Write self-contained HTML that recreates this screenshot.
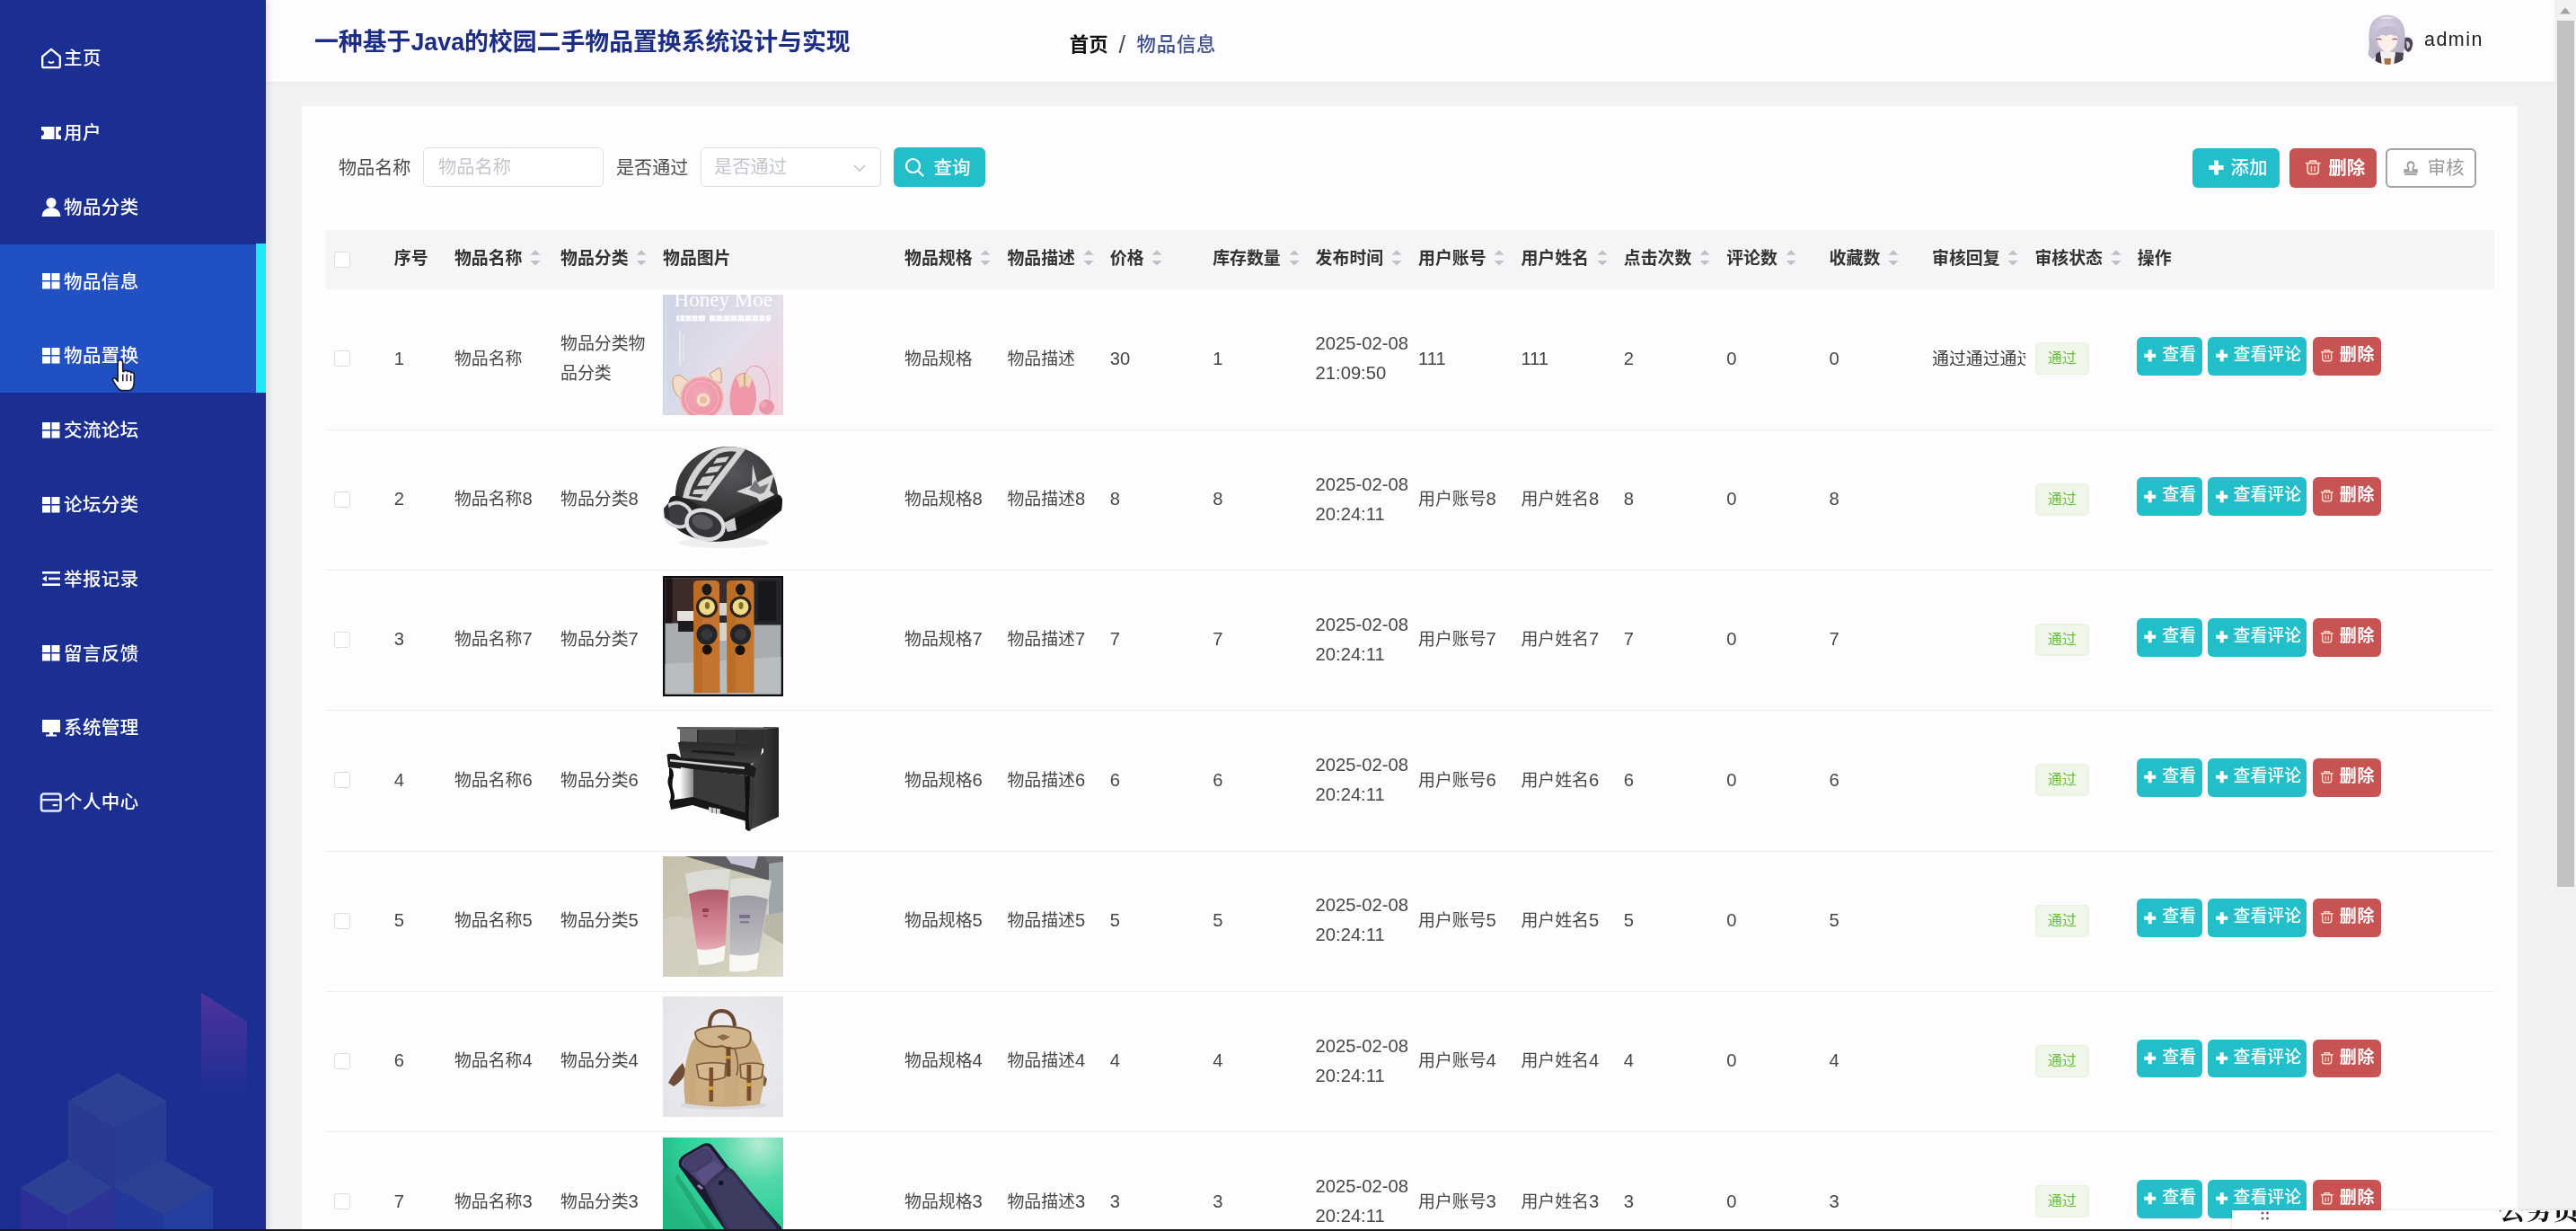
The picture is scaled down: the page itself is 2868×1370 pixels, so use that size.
<!DOCTYPE html>
<html lang="zh-CN"><head><meta charset="utf-8"><title>物品信息</title>
<style>
*{box-sizing:border-box;margin:0;padding:0}
html,body{width:2868px;height:1370px;overflow:hidden}
body{position:relative;background:#f1f2f3;font-family:"Liberation Sans","Noto Sans CJK SC",sans-serif;color:#555;font-size:19px}
.abs{position:absolute}
#side{will-change:transform;position:absolute;left:0;top:0;width:296px;height:1370px;background:#1b2f93;box-shadow:2px 0 9px rgba(0,0,0,.13);z-index:5;overflow:hidden}
.mi{position:absolute;left:0;width:296px;height:82.7px;color:#fff;font-size:20.5px;letter-spacing:.4px;font-weight:500;line-height:83.6px;white-space:nowrap}
.mi span{position:absolute;left:71px;top:0}
.mi svg{position:absolute;left:44px;top:28.8px}
.mi.act{background:#2150c3}
#cy{position:absolute;left:285px;top:271.4px;width:11px;height:165.7px;background:#22e6fa}
#hdr{will-change:transform;position:absolute;left:296px;top:0;width:2548px;height:91px;background:#fefcfe;box-shadow:0 1px 5px rgba(0,0,0,.05);z-index:3}
#title{position:absolute;left:54px;top:0;line-height:94px;font-size:26.85px;font-weight:700;color:#1b2d84;white-space:nowrap}
#bc{position:absolute;left:894.8px;top:0;line-height:101.2px;font-size:21.4px;white-space:nowrap;color:#3f5391}
#bc b{color:#111;font-weight:700}
#bc i{font-style:normal;color:#4a4f5c;margin:0 12.5px 0 12px;font-weight:400;font-size:27px;line-height:20px;position:relative;top:1.6px}
#bc span{font-weight:500;letter-spacing:.75px}
#admin{position:absolute;left:2403px;top:0;line-height:88.4px;font-size:21.5px;color:#222;letter-spacing:1.45px}
#card{position:absolute;left:336px;top:118px;width:2467px;height:1300px;background:#fefcfe;z-index:1}
.lbl{position:absolute;top:164px;line-height:46.5px;font-size:20.1px;color:#4c4c4c;white-space:nowrap}
.inp{position:absolute;top:164px;height:44px;border:1.4px solid #dcdfe6;border-radius:5px;background:#fff;color:#c3c6cd;font-size:20.3px;line-height:43px;padding-left:16px;white-space:nowrap}
.btn{position:absolute;height:44px;border-radius:6px;color:#fff;font-size:19px;line-height:44px;white-space:nowrap}
.teal{background:#22bfca}
.red{background:#c85353}
#tbl{will-change:transform;position:absolute;left:363px;top:255.6px;width:2413.5px;z-index:2}
#th{position:absolute;left:0;top:0;width:2413.5px;height:66.4px;background:#f5f4f6}
.h{position:absolute;top:0;line-height:63px;font-weight:700;color:#333;font-size:18.9px;white-space:nowrap}
.car{position:absolute;top:20px;width:12px;height:24px}
.row{position:absolute;left:0;width:2413.5px;height:156.3px;border-bottom:1.3px solid #ebeef5}
.c{position:absolute;top:0;height:153.8px;display:flex;align-items:center;font-size:18.9px;line-height:33px;color:#474747;white-space:nowrap}
.n{font-size:20.2px}
.c.w{white-space:normal}
.cb{position:absolute;width:18px;height:18px;border:1.3px solid #dcdfe6;border-radius:3px;background:#fff}
.tag{position:absolute;left:1902.5px;top:59px;width:60.5px;height:36px;border:1.3px solid #e4f2da;background:#f0f7ea;border-radius:5px;color:#67c23a;font-size:16px;line-height:33px;text-align:center}
.b1{left:2016px;width:72.5px}
.b2{left:2095px;width:110px}
.b3{left:2211.8px;width:76px}
.rb{top:52.8px;height:42.8px;line-height:40px;font-size:18.9px;font-weight:500}
.rb svg{position:absolute;top:13px}
.rb span{position:absolute;top:0}
.img{position:absolute;left:375px;top:5.5px;width:134px;height:134px;overflow:hidden}
#sb{position:absolute;left:2844px;top:0;width:24px;height:1370px;background:#f1f1f1;z-index:6}
#sbt{position:absolute;left:3px;top:23px;width:19px;height:964px;background:#c1c0c2}
#ov{will-change:transform;position:absolute;left:2485px;top:1347px;width:383px;height:21px;background:#fff;z-index:8;overflow:hidden;box-shadow:0 0 3px rgba(0,0,0,.15)}
#ov span{position:absolute;left:297px;top:-15px;font-family:"Liberation Serif","Noto Serif CJK SC",serif;font-weight:700;font-size:30px;color:#111;white-space:nowrap;line-height:30px}
#bot{position:absolute;left:0;top:1367.5px;width:2868px;height:2.5px;background:#1a1a1e;z-index:9}
</style></head>
<body>
<div id="side">
<div class="mi" style="top:23.0px"><svg width="26" height="26" viewBox="0 0 26 26"><path d="M13 2.800 L22.800 10.800 V21.500 Q22.800 23.200 21 23.200 H5 Q3.200 23.200 3.200 21.500 V10.800 Z" fill="none" stroke="#fff" stroke-width="2.300" stroke-linejoin="round"/><path d="M10 16.5 Q13 19.5 16 16.5" fill="none" stroke="#fff" stroke-width="2"/></svg><span>主页</span></div>
<div class="mi" style="top:105.8px"><svg width="26" height="26" viewBox="0 0 26 26"><path d="M2 6 H24 V10 A3 3 0 0 0 24 16 V20 H2 V16 A3 3 0 0 0 2 10 Z" fill="#fff"/><rect x="16.5" y="6" width="1.6" height="14" fill="#1b2f93"/></svg><span>用户</span></div>
<div class="mi" style="top:188.6px"><svg width="26" height="26" viewBox="0 0 26 26"><circle cx="13" cy="8.5" r="5.5" fill="#fff"/><path d="M2.5 24 Q3 15 13 14 Q23 15 23.5 24 Z" fill="#fff"/></svg><span>物品分类</span></div>
<div class="mi act" style="top:271.5px"><svg width="26" height="26" viewBox="0 0 26 26"><rect x="3" y="4" width="9" height="8" fill="#fff"/><rect x="13.5" y="4" width="9" height="8" fill="#fff"/><rect x="3" y="13.5" width="9" height="8" fill="#fff"/><rect x="13.5" y="13.5" width="9" height="8" fill="#fff"/></svg><span>物品信息</span></div>
<div class="mi act" style="top:354.3px"><svg width="26" height="26" viewBox="0 0 26 26"><rect x="3" y="4" width="9" height="8" fill="#fff"/><rect x="13.5" y="4" width="9" height="8" fill="#fff"/><rect x="3" y="13.5" width="9" height="8" fill="#fff"/><rect x="13.5" y="13.5" width="9" height="8" fill="#fff"/></svg><span>物品置换</span></div>
<div class="mi" style="top:437.1px"><svg width="26" height="26" viewBox="0 0 26 26"><rect x="3" y="4" width="9" height="8" fill="#fff"/><rect x="13.5" y="4" width="9" height="8" fill="#fff"/><rect x="3" y="13.5" width="9" height="8" fill="#fff"/><rect x="13.5" y="13.5" width="9" height="8" fill="#fff"/></svg><span>交流论坛</span></div>
<div class="mi" style="top:519.9px"><svg width="26" height="26" viewBox="0 0 26 26"><rect x="3" y="4" width="9" height="8" fill="#fff"/><rect x="13.5" y="4" width="9" height="8" fill="#fff"/><rect x="3" y="13.5" width="9" height="8" fill="#fff"/><rect x="13.5" y="13.5" width="9" height="8" fill="#fff"/></svg><span>论坛分类</span></div>
<div class="mi" style="top:602.7px"><svg width="26" height="26" viewBox="0 0 26 26"><rect x="3" y="5" width="20" height="2.6" fill="#fff"/><rect x="10" y="11.7" width="13" height="2.6" fill="#fff"/><rect x="3" y="18.4" width="20" height="2.6" fill="#fff"/><path d="M3 13 L8 9.5 V16.5 Z" fill="#fff"/></svg><span>举报记录</span></div>
<div class="mi" style="top:685.6px"><svg width="26" height="26" viewBox="0 0 26 26"><rect x="3" y="4" width="9" height="8" fill="#fff"/><rect x="13.5" y="4" width="9" height="8" fill="#fff"/><rect x="3" y="13.5" width="9" height="8" fill="#fff"/><rect x="13.5" y="13.5" width="9" height="8" fill="#fff"/></svg><span>留言反馈</span></div>
<div class="mi" style="top:768.4px"><svg width="26" height="26" viewBox="0 0 26 26"><rect x="3" y="4" width="20" height="14" fill="#fff"/><rect x="11" y="18" width="4" height="3" fill="#fff"/><rect x="7" y="20.5" width="12" height="2" fill="#fff"/></svg><span>系统管理</span></div>
<div class="mi" style="top:851.2px"><svg width="26" height="26" viewBox="0 0 26 26"><rect x="2" y="3.500" width="21.500" height="19" rx="2.800" fill="none" stroke="#e4e8ff" stroke-width="2.600"/><rect x="2" y="9" width="21.500" height="2.300" fill="#e4e8ff"/><rect x="14.500" y="15" width="6" height="2.200" fill="#e4e8ff"/></svg><span>个人中心</span></div>
<div id="cy"></div>
<svg class="abs" style="left:0;top:1080px" width="296" height="290" viewBox="0 1080 296 290">
<defs><linearGradient id="pg" x1="0" y1="0" x2="0" y2="1"><stop offset="0" stop-color="#5a35a0" stop-opacity=".85"/><stop offset=".6" stop-color="#3c309a" stop-opacity=".55"/><stop offset="1" stop-color="#2a3096" stop-opacity="0"/></linearGradient></defs>
<polygon points="224,1105 275,1137 275,1230 224,1216" fill="url(#pg)"/>
<polygon points="131,1194 185,1225 128,1256 76,1225" fill="#2d4194"/>
<polygon points="76,1225 128,1256 128,1322 76,1290" fill="#2a3a93"/>
<polygon points="128,1256 185,1225 185,1290 128,1322" fill="#2b3c93"/>
<polygon points="76,1290 126,1322 74,1353 23,1322" fill="#2d4194"/>
<polygon points="180,1290 237,1322 183,1353 128,1322" fill="#2d4194"/>
<polygon points="23,1322 74,1353 74,1370 23,1370" fill="#2b2f97"/>
<polygon points="74,1353 126,1322 128,1322 128,1370 74,1370" fill="#2f3399"/>
<polygon points="128,1322 183,1353 183,1370 128,1370" fill="#21399a"/>
<polygon points="183,1353 237,1322 237,1370 183,1370" fill="#243f9f"/>
</svg>
<svg class="abs" style="left:122px;top:398px;z-index:3" width="35" height="41.500" viewBox="0 0 32 38"><path d="M10 2.5 C12 2 13.5 3 13.5 5 V14 L15 14 C15 12.6 18 12.6 18.2 14.4 C19 13.3 21.6 13.6 21.8 15.5 C22.8 14.6 25 15 25 17 V25 C25 30 22.5 33.5 20 33.5 H12 C9.5 33.5 6.5 29 3.5 23.5 C2.3 21.3 4.5 19.8 6.3 21.6 L8.3 24 V5 C8.3 3.5 9 2.8 10 2.5 Z" fill="#fff" stroke="#1a1a3a" stroke-width="1.6" stroke-linejoin="round"/><path d="M13.5 17 V24 M17.6 17 V24 M21.6 18 V24" stroke="#1a1a3a" stroke-width="1.4"/></svg>
</div>
<div id="hdr"><div id="title">一种基于Java的校园二手物品置换系统设计与实现</div>
<div id="bc"><b>首页</b><i>/</i><span>物品信息</span></div>
<svg class="abs" style="left:2335px;top:16px" width="56" height="56" viewBox="0 0 56 56"><defs><clipPath id="av"><circle cx="28" cy="28" r="28"/></clipPath><radialGradient id="avh" cx=".5" cy=".3" r=".7"><stop offset="0" stop-color="#d9d3e3"/><stop offset="1" stop-color="#b4adc4"/></radialGradient></defs><g clip-path="url(#av)"><path d="M46 26 Q54 24 55.500 32 Q56 40 50 42 Q46 40 45 34 Z" fill="#4d4756"/><path d="M48 30 Q52 30 52 35 Q51 38 49 38 Z" fill="#d9d3de"/><path d="M6.500 24 Q6 2 26.500 0.500 Q47 2 46.500 24 Q47 36 44 46 L36 44 L16 44 Q12 52 4 50 Q8 38 6.500 24 Z" fill="url(#avh)"/><path d="M18 4 Q26 1 35 4 Q27 6 18 4 Z" fill="#e9e4f0"/><path d="M14.500 44 L19 41 L21 56 L13 56 Z" fill="#3b3742"/><path d="M36 42 L45 43 L44 54 L34 56 Z" fill="#4a4452"/><path d="M19 41 L36 42 L34 56 L21 56 Z" fill="#f2eef2"/><path d="M23.500 49 L31 49 L30.500 56 L24 56 Z" fill="#a9713c"/><path d="M15.500 26 Q16 22 20 23 L34 23 Q38 22 38.500 27 Q38 35 33 39 Q28 43 26.500 43 Q24 42 20 38 Q15.500 33 15.500 26 Z" fill="#fcefe9"/><path d="M13 28 Q13 14 27 13 Q41 14 40.500 28 Q38 22 34 24 Q30 20 26 24.500 Q21 21 18 25 Q14 24 13 28 Z" fill="#c3bcd1"/><path d="M14.500 28 Q17.500 26.500 20.500 28" fill="none" stroke="#9a6688" stroke-width="1.500"/><path d="M32.500 28 Q35.500 26.500 38 28" fill="none" stroke="#9a6688" stroke-width="1.500"/><path d="M6.500 26 Q8 40 5 50 L11 50 Q14 40 13 28 Z" fill="#bdb6cb"/></g></svg>
<div id="admin">admin</div>
</div>
<div id="card"></div>
<div class="abs" style="left:0;top:0;z-index:2;will-change:transform">
<div class="lbl" style="left:377px">物品名称</div>
<div class="inp" style="left:471px;width:201px">物品名称</div>
<div class="lbl" style="left:686px">是否通过</div>
<div class="inp" style="left:780px;width:201px;padding-left:14px">是否通过<svg class="abs" style="left:166px;top:12px" width="20" height="20" viewBox="0 0 20 20"><path d="M4 7 L10 13 L16 7" fill="none" stroke="#c0c4cc" stroke-width="1.6"/></svg></div>
<div class="btn teal" style="left:994.5px;top:164px;width:102px"><svg class="abs" style="left:10px;top:9px" width="26" height="26" viewBox="0 0 26 26"><circle cx="11.5" cy="11.5" r="7.5" fill="none" stroke="#fff" stroke-width="2.2"/><path d="M17 17 L22.5 22.5" stroke="#fff" stroke-width="2.4" stroke-linecap="round"/></svg><span class="abs" style="left:45px;top:0;font-size:20.5px;font-weight:500;line-height:45.5px">查询</span></div>
<div class="btn teal" style="left:2441.4px;top:164.5px;width:97px"><svg class="abs" style="left:16.5px;top:12.5px" width="19" height="19" viewBox="0 0 20 20"><path d="M10 1.5 V18.5 M1.5 10 H18.5" stroke="#fff" stroke-width="5.2"/></svg><span class="abs" style="left:42px;top:0;font-size:20.5px;font-weight:500">添加</span></div>
<div class="btn red" style="left:2549.2px;top:164.5px;width:97px"><svg class="abs" style="left:16.5px;top:12.5px" width="18.5" height="18.5" viewBox="0 0 20 20"><path d="M1 5 H19 M6.5 4.5 V2.2 H13.500 V4.500 M3.500 6 V14.500 Q3.500 18 7 18 H13 Q16.500 18 16.500 14.500 V6" fill="none" stroke="#ffd9c8" stroke-width="1.9"/><path d="M8 8.500 V15 M12 8.500 V15" stroke="#ffd9c8" stroke-width="1.600"/></svg><span class="abs" style="left:43px;top:0;font-size:20.5px;font-weight:700">删除</span></div>
<div class="btn" style="left:2656.4px;top:164.5px;width:100.6px;background:#fff;border:2px solid #a3a3a6;color:#999;line-height:40px"><svg class="abs" style="left:17px;top:11px" width="18" height="18" viewBox="0 0 20 20"><path d="M7.2 10 C5 7.5 6 2.5 10 2.5 C14 2.5 15 7.5 12.8 10 V12.5 H17.5 V15 H2.5 V12.5 H7.2 Z M2.5 18 H17.5" fill="none" stroke="#9a9a9c" stroke-width="2"/></svg><span class="abs" style="left:44px;top:0;font-size:20.5px">审核</span></div>
</div>
<div id="tbl"><div id="th">
<div class="cb" style="left:8.7px;top:24px"></div>
<div class="h" style="left:75.8px">序号</div>
<div class="h" style="left:142.9px">物品名称</div><svg class="car" style="left:227.2px" viewBox="0 0 12 24"><path d="M6 2.2 L11.5 7.8 H0.5 Z M6 19.5 L11.5 13.9 H0.5 Z" fill="#c1c1c7"/></svg>
<div class="h" style="left:261.0px">物品分类</div><svg class="car" style="left:345.3px" viewBox="0 0 12 24"><path d="M6 2.2 L11.5 7.8 H0.5 Z M6 19.5 L11.5 13.9 H0.5 Z" fill="#c1c1c7"/></svg>
<div class="h" style="left:375.0px">物品图片</div>
<div class="h" style="left:644.0px">物品规格</div><svg class="car" style="left:728.3px" viewBox="0 0 12 24"><path d="M6 2.2 L11.5 7.8 H0.5 Z M6 19.5 L11.5 13.9 H0.5 Z" fill="#c1c1c7"/></svg>
<div class="h" style="left:758.4px">物品描述</div><svg class="car" style="left:842.7px" viewBox="0 0 12 24"><path d="M6 2.2 L11.5 7.8 H0.5 Z M6 19.5 L11.5 13.9 H0.5 Z" fill="#c1c1c7"/></svg>
<div class="h" style="left:872.8px">价格</div><svg class="car" style="left:919.3px" viewBox="0 0 12 24"><path d="M6 2.2 L11.5 7.8 H0.5 Z M6 19.5 L11.5 13.9 H0.5 Z" fill="#c1c1c7"/></svg>
<div class="h" style="left:987.2px">库存数量</div><svg class="car" style="left:1071.5px" viewBox="0 0 12 24"><path d="M6 2.2 L11.5 7.8 H0.5 Z M6 19.5 L11.5 13.9 H0.5 Z" fill="#c1c1c7"/></svg>
<div class="h" style="left:1101.6px">发布时间</div><svg class="car" style="left:1185.9px" viewBox="0 0 12 24"><path d="M6 2.2 L11.5 7.8 H0.5 Z M6 19.5 L11.5 13.9 H0.5 Z" fill="#c1c1c7"/></svg>
<div class="h" style="left:1216.0px">用户账号</div><svg class="car" style="left:1300.3px" viewBox="0 0 12 24"><path d="M6 2.2 L11.5 7.8 H0.5 Z M6 19.5 L11.5 13.9 H0.5 Z" fill="#c1c1c7"/></svg>
<div class="h" style="left:1330.4px">用户姓名</div><svg class="car" style="left:1414.7px" viewBox="0 0 12 24"><path d="M6 2.2 L11.5 7.8 H0.5 Z M6 19.5 L11.5 13.9 H0.5 Z" fill="#c1c1c7"/></svg>
<div class="h" style="left:1444.8px">点击次数</div><svg class="car" style="left:1529.1px" viewBox="0 0 12 24"><path d="M6 2.2 L11.5 7.8 H0.5 Z M6 19.5 L11.5 13.9 H0.5 Z" fill="#c1c1c7"/></svg>
<div class="h" style="left:1559.2px">评论数</div><svg class="car" style="left:1624.6px" viewBox="0 0 12 24"><path d="M6 2.2 L11.5 7.8 H0.5 Z M6 19.5 L11.5 13.9 H0.5 Z" fill="#c1c1c7"/></svg>
<div class="h" style="left:1673.6px">收藏数</div><svg class="car" style="left:1739.0px" viewBox="0 0 12 24"><path d="M6 2.2 L11.5 7.8 H0.5 Z M6 19.5 L11.5 13.9 H0.5 Z" fill="#c1c1c7"/></svg>
<div class="h" style="left:1788.0px">审核回复</div><svg class="car" style="left:1872.3px" viewBox="0 0 12 24"><path d="M6 2.2 L11.5 7.8 H0.5 Z M6 19.5 L11.5 13.9 H0.5 Z" fill="#c1c1c7"/></svg>
<div class="h" style="left:1902.4px">审核状态</div><svg class="car" style="left:1986.7px" viewBox="0 0 12 24"><path d="M6 2.2 L11.5 7.8 H0.5 Z M6 19.5 L11.5 13.9 H0.5 Z" fill="#c1c1c7"/></svg>
<div class="h" style="left:2016.8px">操作</div>
</div>
<div class="row" style="top:66.4px">
<div class="cb" style="left:8.7px;top:68px"></div>
<div class="c" style="left:75.8px"><div><span class="n">1</span></div></div><div class="c" style="left:142.9px"><div>物品名称</div></div><div class="c" style="left:261.0px"><div>物品分类物<br>品分类</div></div><div class="c" style="left:644.0px"><div>物品规格</div></div><div class="c" style="left:758.4px"><div>物品描述</div></div><div class="c" style="left:872.8px"><div><span class="n">30</span></div></div><div class="c" style="left:987.2px"><div><span class="n">1</span></div></div><div class="c" style="left:1101.6px"><div><span class="n">2025-02-08</span><br><span class="n">21:09:50</span></div></div><div class="c" style="left:1216.0px"><div><span class="n">111</span></div></div><div class="c" style="left:1330.4px"><div><span class="n">111</span></div></div><div class="c" style="left:1444.8px"><div><span class="n">2</span></div></div><div class="c" style="left:1559.2px"><div><span class="n">0</span></div></div><div class="c" style="left:1673.6px"><div><span class="n">0</span></div></div><div class="c" style="left:1788.0px;width:104px;overflow:hidden;color:#3c3c3c"><div>通过通过通过</div></div>
<div class="img"><svg width="134" height="134" viewBox="0 0 134 134"><defs><linearGradient id="g1" x1="0" y1="0" x2="1" y2="1"><stop offset="0" stop-color="#cdd2e3"/><stop offset=".5" stop-color="#e3deeb"/><stop offset="1" stop-color="#f3d0dc"/></linearGradient><linearGradient id="g1b" x1="0" y1="0" x2="1" y2="0"><stop offset="0" stop-color="#c6d9e6"/><stop offset="1" stop-color="#e8d4e2" stop-opacity="0"/></linearGradient><radialGradient id="g1c" cx=".45" cy=".4" r=".6"><stop offset="0" stop-color="#f3a9b8"/><stop offset="1" stop-color="#ec94a6"/></radialGradient></defs><rect width="134" height="134" fill="url(#g1)"/><rect y="0" width="70" height="134" fill="url(#g1b)" opacity=".6"/><rect x="3" y="0" width="1.2" height="134" fill="#e9e6f0" opacity=".7"/><rect x="129" y="0" width="1.2" height="134" fill="#f6e6ee" opacity=".7"/><text x="12.5" y="13" font-family="'Liberation Serif',serif" font-size="23.5" fill="#fff" textLength="109.5" lengthAdjust="spacingAndGlyphs">Honey Moe</text><g fill="#fff" opacity=".85"><rect x="15" y="23" width="32" height="6.5" rx="1"/><rect x="52" y="23" width="68" height="6.5" rx="1"/></g><g fill="#dfe0ee" opacity=".9"><rect x="18" y="23" width="1.5" height="6.5"/><rect x="24" y="23" width="1.5" height="6.5"/><rect x="31" y="23" width="1.5" height="6.5"/><rect x="38" y="23" width="1.5" height="6.5"/><rect x="58" y="23" width="1.5" height="6.5"/><rect x="66" y="23" width="1.5" height="6.5"/><rect x="74" y="23" width="1.5" height="6.5"/><rect x="82" y="23" width="1.5" height="6.5"/><rect x="90" y="23" width="1.5" height="6.5"/><rect x="98" y="23" width="1.5" height="6.5"/><rect x="106" y="23" width="1.5" height="6.5"/><rect x="113" y="23" width="1.5" height="6.5"/></g><rect x="18" y="39" width="2" height="40" fill="#fff" opacity=".4"/><rect x="22" y="44" width="1.6" height="30" fill="#fff" opacity=".35"/><path d="M92 88 Q98 74 110 82 Q120 92 119 116" fill="none" stroke="#e7a3b2" stroke-width="1.1"/><path d="M11 96 Q12 88 20 90 L33 100 L20 116 Q10 108 11 96 Z" fill="#f3dcc8" stroke="#c79a72" stroke-width="1"/><path d="M52 88 L63 81 Q66 84 65 98 L56 96 Z" fill="#f3dcc8" stroke="#c79a72" stroke-width="1"/><circle cx="43.5" cy="115" r="25" fill="#f1c9bd"/><circle cx="43.5" cy="115" r="23" fill="url(#g1c)"/><circle cx="43.5" cy="115" r="18.5" fill="none" stroke="#f4b9c4" stroke-width="1.2"/><circle cx="45" cy="117" r="7.5" fill="#f6dcc6"/><circle cx="45" cy="117" r="4" fill="#f2b7a4"/><path d="M76 104 Q80 86 90 87 Q102 90 104 110 Q105 126 98 134 L78 134 Q72 122 76 104 Z" fill="#ee98a8"/><path d="M82 92 Q90 84 100 92 L96 104 L91 100 L86 104 Z" fill="#ecd3b4"/><path d="M91 87 L91 100" stroke="#b98d5a" stroke-width="1.2"/><circle cx="115.5" cy="125" r="8.5" fill="#ea96a6"/><circle cx="112" cy="122" r="3.5" fill="#f0a8b6"/></svg></div>
<div class="tag">通过</div>
<div class="btn teal rb b1"><svg class="abs" style="left:7.3px;top:13.2px" width="15.4" height="15.4" viewBox="0 0 20 20"><path d="M10 1.5 V18.5 M1.5 10 H18.5" stroke="#fff" stroke-width="5.2"/></svg><span style="left:28.3px">查看</span></div><div class="btn teal rb b2"><svg class="abs" style="left:7.5px;top:13.2px" width="15.4" height="15.4" viewBox="0 0 20 20"><path d="M10 1.5 V18.5 M1.5 10 H18.5" stroke="#fff" stroke-width="5.2"/></svg><span style="left:28.5px">查看评论</span></div><div class="btn red rb b3"><svg class="abs" style="left:8px;top:13px" width="15.4" height="15.4" viewBox="0 0 20 20"><path d="M1 5 H19 M6.5 4.5 V2.2 H13.500 V4.500 M3.500 6 V14.500 Q3.500 18 7 18 H13 Q16.500 18 16.500 14.500 V6" fill="none" stroke="#ffd9c8" stroke-width="1.9"/><path d="M8 8.500 V15 M12 8.500 V15" stroke="#ffd9c8" stroke-width="1.600"/></svg><span style="left:30px;font-weight:700;letter-spacing:.8px">删除</span></div>
</div>
<div class="row" style="top:222.7px">
<div class="cb" style="left:8.7px;top:68px"></div>
<div class="c" style="left:75.8px"><div><span class="n">2</span></div></div><div class="c" style="left:142.9px"><div>物品名称<span class="n">8</span></div></div><div class="c" style="left:261.0px"><div>物品分类<span class="n">8</span></div></div><div class="c" style="left:644.0px"><div>物品规格<span class="n">8</span></div></div><div class="c" style="left:758.4px"><div>物品描述<span class="n">8</span></div></div><div class="c" style="left:872.8px"><div><span class="n">8</span></div></div><div class="c" style="left:987.2px"><div><span class="n">8</span></div></div><div class="c" style="left:1101.6px"><div><span class="n">2025-02-08</span><br><span class="n">20:24:11</span></div></div><div class="c" style="left:1216.0px"><div>用户账号<span class="n">8</span></div></div><div class="c" style="left:1330.4px"><div>用户姓名<span class="n">8</span></div></div><div class="c" style="left:1444.8px"><div><span class="n">8</span></div></div><div class="c" style="left:1559.2px"><div><span class="n">0</span></div></div><div class="c" style="left:1673.6px"><div><span class="n">8</span></div></div>
<div class="img"><svg width="134" height="134" viewBox="0 0 134 134"><defs><radialGradient id="g2" cx=".55" cy=".35" r=".7"><stop offset="0" stop-color="#56565a"/><stop offset="1" stop-color="#2c2c2f"/></radialGradient></defs><rect width="134" height="134" fill="#fefdfe"/><ellipse cx="68" cy="120" rx="50" ry="6" fill="#eeeef0"/><path d="M14 72 Q12 40 40 22 Q66 8 92 16 Q124 28 128 66 L128 74 L60 100 Q30 96 14 72 Z" fill="url(#g2)"/><path d="M56 17 Q74 10 92 16 L48 74 L22 70 Q28 38 56 17 Z" fill="#d4d4d6"/><path d="M62 21 Q72 17 82 19 L42 70 L29 68 Q36 40 62 21 Z" fill="#3a3a3d"/><g fill="#d4d4d6"><path d="M60 26 L74 24 L70 30 L56 32 Z"/><path d="M52 36 L66 34 L61 41 L47 43 Z"/><path d="M44 47 L58 45 L52 56 L38 57 Z"/><path d="M35 61 L49 60 L46 66 L33 66 Z"/></g><path d="M100 33 L105 53 L124 43 L119 62 L128 70 L113 84 L105 70 L82 63 L99 56 Z" fill="#d8d8da"/><path d="M103 50 L108 58 L118 54 L113 64 L108 66 L96 61 Z" fill="#77777b"/><path d="M6 76 Q8 66 16 68 Q40 74 62 96 L126 66 Q133 66 133 74 L132 84 L108 104 Q80 122 48 118 Q18 112 8 96 Z" fill="#232325"/><path d="M74 96 L130 68 L133 72 L132 84 L80 110 Z" fill="#161618"/><ellipse cx="17" cy="89" rx="15" ry="13" transform="rotate(25 17 89)" fill="#3a3c41" stroke="#d9d9dc" stroke-width="4"/><ellipse cx="47" cy="100" rx="21" ry="15.5" transform="rotate(18 47 100)" fill="#34363b" stroke="#dcdcdf" stroke-width="4.5"/><ellipse cx="44" cy="97" rx="12" ry="8" transform="rotate(18 44 97)" fill="#55575d"/><path d="M68 98 L80 92 L82 106 L72 108 Z" fill="#cfcfd2"/><path d="M1 82 L6 76 L8 96 L2 92 Z" fill="#2b2b2d"/></svg></div>
<div class="tag">通过</div>
<div class="btn teal rb b1"><svg class="abs" style="left:7.3px;top:13.2px" width="15.4" height="15.4" viewBox="0 0 20 20"><path d="M10 1.5 V18.5 M1.5 10 H18.5" stroke="#fff" stroke-width="5.2"/></svg><span style="left:28.3px">查看</span></div><div class="btn teal rb b2"><svg class="abs" style="left:7.5px;top:13.2px" width="15.4" height="15.4" viewBox="0 0 20 20"><path d="M10 1.5 V18.5 M1.5 10 H18.5" stroke="#fff" stroke-width="5.2"/></svg><span style="left:28.5px">查看评论</span></div><div class="btn red rb b3"><svg class="abs" style="left:8px;top:13px" width="15.4" height="15.4" viewBox="0 0 20 20"><path d="M1 5 H19 M6.5 4.5 V2.2 H13.500 V4.500 M3.500 6 V14.500 Q3.500 18 7 18 H13 Q16.500 18 16.500 14.500 V6" fill="none" stroke="#ffd9c8" stroke-width="1.9"/><path d="M8 8.500 V15 M12 8.500 V15" stroke="#ffd9c8" stroke-width="1.600"/></svg><span style="left:30px;font-weight:700;letter-spacing:.8px">删除</span></div>
</div>
<div class="row" style="top:379.0px">
<div class="cb" style="left:8.7px;top:68px"></div>
<div class="c" style="left:75.8px"><div><span class="n">3</span></div></div><div class="c" style="left:142.9px"><div>物品名称<span class="n">7</span></div></div><div class="c" style="left:261.0px"><div>物品分类<span class="n">7</span></div></div><div class="c" style="left:644.0px"><div>物品规格<span class="n">7</span></div></div><div class="c" style="left:758.4px"><div>物品描述<span class="n">7</span></div></div><div class="c" style="left:872.8px"><div><span class="n">7</span></div></div><div class="c" style="left:987.2px"><div><span class="n">7</span></div></div><div class="c" style="left:1101.6px"><div><span class="n">2025-02-08</span><br><span class="n">20:24:11</span></div></div><div class="c" style="left:1216.0px"><div>用户账号<span class="n">7</span></div></div><div class="c" style="left:1330.4px"><div>用户姓名<span class="n">7</span></div></div><div class="c" style="left:1444.8px"><div><span class="n">7</span></div></div><div class="c" style="left:1559.2px"><div><span class="n">0</span></div></div><div class="c" style="left:1673.6px"><div><span class="n">7</span></div></div>
<div class="img"><svg width="134" height="134" viewBox="0 0 134 134"><rect width="134" height="134" fill="#0c0c0c"/><rect x="2.500" y="2.500" width="129" height="129" fill="#a9adb1"/><rect x="2.500" y="2.500" width="129" height="50" fill="#3b2b29"/><rect x="2.500" y="2.500" width="8" height="50" fill="#1c1616"/><rect x="16" y="39" width="20" height="11" fill="#e4e2dc"/><rect x="17" y="50" width="18" height="12" fill="#1d1d20"/><rect x="62" y="30" width="10" height="42" fill="#d6d2c8"/><rect x="62" y="44" width="10" height="8" fill="#2a2a2c"/><rect x="101" y="2.500" width="30.500" height="52" fill="#24242a"/><rect x="106" y="6" width="20" height="44" fill="#18181c"/><path d="M2.500 98 L131.500 90 L131.500 131.500 L2.500 131.500 Z" fill="#b9bdc0"/><path d="M34 9 Q35 5 40 5 L57 5 Q62 5 63 9 L63.500 130 L34.500 130 Z" fill="#c27430"/><path d="M71 9 Q72 5 77 5 L95 5 Q100.500 5 101.500 10 L101.500 130 L71.500 130 Z" fill="#c4762f"/><path d="M34 9 Q35 5 40 5 L44 5 L44 130 L34.500 130 Z" fill="#b4661f" opacity=".55"/><path d="M71 9 Q72 5 77 5 L81 5 L81 130 L71.500 130 Z" fill="#b4661f" opacity=".55"/><ellipse cx="49" cy="15" rx="5.500" ry="6.500" fill="#1a1a1c"/><ellipse cx="86.500" cy="15" rx="5.500" ry="6.500" fill="#1a1a1c"/><circle cx="49" cy="34.500" r="12" fill="#2c241c"/><circle cx="49" cy="34.500" r="9" fill="#ecdc8a"/><ellipse cx="49.500" cy="33" rx="2.600" ry="4" fill="#8a6a2a"/><circle cx="86.500" cy="34.500" r="12" fill="#2c241c"/><circle cx="86.500" cy="34.500" r="9" fill="#ecdc8a"/><ellipse cx="87" cy="33" rx="2.600" ry="4" fill="#8a6a2a"/><circle cx="49" cy="65" r="11.500" fill="#242426"/><circle cx="49" cy="65" r="6.500" fill="#35373a"/><circle cx="86.500" cy="65" r="11.500" fill="#242426"/><circle cx="86.500" cy="65" r="6.500" fill="#35373a"/><circle cx="49.300" cy="82" r="5.500" fill="#17120e"/><circle cx="86" cy="82.500" r="5.500" fill="#17120e"/></svg></div>
<div class="tag">通过</div>
<div class="btn teal rb b1"><svg class="abs" style="left:7.3px;top:13.2px" width="15.4" height="15.4" viewBox="0 0 20 20"><path d="M10 1.5 V18.5 M1.5 10 H18.5" stroke="#fff" stroke-width="5.2"/></svg><span style="left:28.3px">查看</span></div><div class="btn teal rb b2"><svg class="abs" style="left:7.5px;top:13.2px" width="15.4" height="15.4" viewBox="0 0 20 20"><path d="M10 1.5 V18.5 M1.5 10 H18.5" stroke="#fff" stroke-width="5.2"/></svg><span style="left:28.5px">查看评论</span></div><div class="btn red rb b3"><svg class="abs" style="left:8px;top:13px" width="15.4" height="15.4" viewBox="0 0 20 20"><path d="M1 5 H19 M6.5 4.5 V2.2 H13.500 V4.500 M3.500 6 V14.500 Q3.500 18 7 18 H13 Q16.500 18 16.500 14.500 V6" fill="none" stroke="#ffd9c8" stroke-width="1.9"/><path d="M8 8.500 V15 M12 8.500 V15" stroke="#ffd9c8" stroke-width="1.600"/></svg><span style="left:30px;font-weight:700;letter-spacing:.8px">删除</span></div>
</div>
<div class="row" style="top:535.3px">
<div class="cb" style="left:8.7px;top:68px"></div>
<div class="c" style="left:75.8px"><div><span class="n">4</span></div></div><div class="c" style="left:142.9px"><div>物品名称<span class="n">6</span></div></div><div class="c" style="left:261.0px"><div>物品分类<span class="n">6</span></div></div><div class="c" style="left:644.0px"><div>物品规格<span class="n">6</span></div></div><div class="c" style="left:758.4px"><div>物品描述<span class="n">6</span></div></div><div class="c" style="left:872.8px"><div><span class="n">6</span></div></div><div class="c" style="left:987.2px"><div><span class="n">6</span></div></div><div class="c" style="left:1101.6px"><div><span class="n">2025-02-08</span><br><span class="n">20:24:11</span></div></div><div class="c" style="left:1216.0px"><div>用户账号<span class="n">6</span></div></div><div class="c" style="left:1330.4px"><div>用户姓名<span class="n">6</span></div></div><div class="c" style="left:1444.8px"><div><span class="n">6</span></div></div><div class="c" style="left:1559.2px"><div><span class="n">0</span></div></div><div class="c" style="left:1673.6px"><div><span class="n">6</span></div></div>
<div class="img"><svg width="134" height="134" viewBox="0 0 134 134"><defs><linearGradient id="g4" x1="0" y1="0" x2="1" y2="0"><stop offset="0" stop-color="#4a4a4c"/><stop offset="1" stop-color="#222224"/></linearGradient><linearGradient id="g4b" x1="0" y1="0" x2="1" y2="0"><stop offset="0" stop-color="#f4f4f5"/><stop offset="1" stop-color="#8a8a8d"/></linearGradient><linearGradient id="g4c" x1="0" y1="0" x2="0" y2="1"><stop offset="0" stop-color="#2a2a2c"/><stop offset="1" stop-color="#454547"/></linearGradient></defs><rect width="134" height="134" fill="#fefdfe"/><path d="M112 12 L129 12.5 L129 112 L94 128 L94 60 L112 40 Z" fill="url(#g4)"/><path d="M16 12 L129 12.5 L112 15 L16 14.5 Z" fill="#5a5a5d"/><path d="M19 14.5 L112 15 L112 36 L19 30 Z" fill="#2b2b2d"/><path d="M19 15 L38 15 L38 29 L19 28 Z" fill="#6b6b6e"/><path d="M40 15 L81 15 L81 31 L40 29 Z" fill="#39393b"/><path d="M84 15 L111 15 L111 34 L84 31.5 Z" fill="#303032"/><path d="M17 29 L111 34 L108 48 L94 56 L20 46 Z" fill="url(#g4c)"/><path d="M32 38 Q60 38 80 41 L80 44 Q56 42 32 40 Z" fill="#1a1a1b"/><path d="M4.5 43 Q6 41 14 42 L20 46 L95 52 L104 58 L102 68 L92 66 L6 57 Z" fill="#1b1b1d"/><path d="M8 48 L91 56.5 L91 59 L8 50.5 Z" fill="#d2d2d4"/><path d="M20 57 L34 59 L34 92 L20 90 Z" fill="url(#g4b)"/><path d="M34 59 L92 66 L92 112 L34 98 Z" fill="#3a3a3c"/><path d="M7 57 Q12 58 12 66 Q9 76 12 84 Q14 90 12 94 L8 94 Q10 88 7 80 Q4 72 7 66 Z" fill="#111"/><path d="M91 66 L97 67 Q98 84 96 100 Q95 116 97 128 L92 126 Q91 110 92 96 Z" fill="#111"/><path d="M97 68 L102 68 Q103 90 101 110 L99 124 L97 128 Q96 100 97 68 Z" fill="#39393b"/><path d="M7 94 L33 90 L93 108 L93 117 L33 99 L9 104 Z" fill="#161617"/><path d="M51 101 L64 103.5 L63.5 109 L51 106.5 Z" fill="#d8d8da"/><path d="M55 102 L55 108 M59.5 103 L59.5 108.5" stroke="#555" stroke-width="1"/></svg></div>
<div class="tag">通过</div>
<div class="btn teal rb b1"><svg class="abs" style="left:7.3px;top:13.2px" width="15.4" height="15.4" viewBox="0 0 20 20"><path d="M10 1.5 V18.5 M1.5 10 H18.5" stroke="#fff" stroke-width="5.2"/></svg><span style="left:28.3px">查看</span></div><div class="btn teal rb b2"><svg class="abs" style="left:7.5px;top:13.2px" width="15.4" height="15.4" viewBox="0 0 20 20"><path d="M10 1.5 V18.5 M1.5 10 H18.5" stroke="#fff" stroke-width="5.2"/></svg><span style="left:28.5px">查看评论</span></div><div class="btn red rb b3"><svg class="abs" style="left:8px;top:13px" width="15.4" height="15.4" viewBox="0 0 20 20"><path d="M1 5 H19 M6.5 4.5 V2.2 H13.500 V4.500 M3.500 6 V14.500 Q3.500 18 7 18 H13 Q16.500 18 16.500 14.500 V6" fill="none" stroke="#ffd9c8" stroke-width="1.9"/><path d="M8 8.500 V15 M12 8.500 V15" stroke="#ffd9c8" stroke-width="1.600"/></svg><span style="left:30px;font-weight:700;letter-spacing:.8px">删除</span></div>
</div>
<div class="row" style="top:691.6px">
<div class="cb" style="left:8.7px;top:68px"></div>
<div class="c" style="left:75.8px"><div><span class="n">5</span></div></div><div class="c" style="left:142.9px"><div>物品名称<span class="n">5</span></div></div><div class="c" style="left:261.0px"><div>物品分类<span class="n">5</span></div></div><div class="c" style="left:644.0px"><div>物品规格<span class="n">5</span></div></div><div class="c" style="left:758.4px"><div>物品描述<span class="n">5</span></div></div><div class="c" style="left:872.8px"><div><span class="n">5</span></div></div><div class="c" style="left:987.2px"><div><span class="n">5</span></div></div><div class="c" style="left:1101.6px"><div><span class="n">2025-02-08</span><br><span class="n">20:24:11</span></div></div><div class="c" style="left:1216.0px"><div>用户账号<span class="n">5</span></div></div><div class="c" style="left:1330.4px"><div>用户姓名<span class="n">5</span></div></div><div class="c" style="left:1444.8px"><div><span class="n">5</span></div></div><div class="c" style="left:1559.2px"><div><span class="n">0</span></div></div><div class="c" style="left:1673.6px"><div><span class="n">5</span></div></div>
<div class="img"><svg width="134" height="134" viewBox="0 0 134 134"><defs><linearGradient id="g5" x1="0" y1="0" x2="1" y2="1"><stop offset="0" stop-color="#c4c0ac"/><stop offset=".6" stop-color="#cfcbb9"/><stop offset="1" stop-color="#e0dccd"/></linearGradient><linearGradient id="g5p" x1="0" y1="0" x2="0" y2="1"><stop offset="0" stop-color="#b05a6b"/><stop offset=".45" stop-color="#cc7a8a"/><stop offset=".75" stop-color="#d98f9c"/><stop offset="1" stop-color="#e6aeb6"/></linearGradient><linearGradient id="g5g" x1="0" y1="0" x2="0" y2="1"><stop offset="0" stop-color="#9d9ba6"/><stop offset=".6" stop-color="#b3b0b8"/><stop offset="1" stop-color="#c4c1c6"/></linearGradient></defs><rect width="134" height="134" fill="url(#g5)"/><path d="M0 70 Q30 60 40 80 L40 134 L0 134 Z" fill="#d6d2c2" opacity=".7"/><path d="M25 0 L134 0 L134 66 L118 66 L118 27 Z" fill="#5e5e62"/><path d="M70 0 L106 0 L102 14 L76 8 Z" fill="#c7c5d8"/><path d="M118 6 L134 4 L134 66 L118 66 Z" fill="#9ba7a8"/><path d="M112 0 L134 0 L134 6 L118 8 Z" fill="#6d6d72"/><path d="M108 66 L134 62 L134 98 L104 80 Z" fill="#b9b7a8"/><path d="M25 19.5 Q50 13 75 14.5 L68 116 Q54 122 40 120.5 Z" fill="#dcdcd6"/><path d="M29 42 Q50 34 73 38 L69.5 100 Q54 106 38 104 Z" fill="url(#g5p)"/><path d="M38 103 Q54 106 69.5 99 L68 116 Q54 122 40 120.5 Z" fill="#f7f6f1"/><path d="M75 25.5 Q98 22 121 27 L104.5 125.5 Q90 130 74 128 Z" fill="#deded9"/><path d="M75 46 Q96 40 117 48 L107 108 Q92 113 74.5 110 Z" fill="url(#g5g)"/><path d="M74.500 109 Q92 113 107 107 L104.5 125.500 Q90 130 74 128 Z" fill="#f8f7f3"/><rect x="44" y="58" width="7" height="4" fill="#7a2a3c" opacity=".7"/><rect x="45" y="65" width="5" height="2.500" fill="#7a2a3c" opacity=".6"/><rect x="85" y="65" width="12" height="4" fill="#5a4a78" opacity=".6"/><rect x="86" y="72" width="10" height="2.500" fill="#5a4a78" opacity=".5"/></svg></div>
<div class="tag">通过</div>
<div class="btn teal rb b1"><svg class="abs" style="left:7.3px;top:13.2px" width="15.4" height="15.4" viewBox="0 0 20 20"><path d="M10 1.5 V18.5 M1.5 10 H18.5" stroke="#fff" stroke-width="5.2"/></svg><span style="left:28.3px">查看</span></div><div class="btn teal rb b2"><svg class="abs" style="left:7.5px;top:13.2px" width="15.4" height="15.4" viewBox="0 0 20 20"><path d="M10 1.5 V18.5 M1.5 10 H18.5" stroke="#fff" stroke-width="5.2"/></svg><span style="left:28.5px">查看评论</span></div><div class="btn red rb b3"><svg class="abs" style="left:8px;top:13px" width="15.4" height="15.4" viewBox="0 0 20 20"><path d="M1 5 H19 M6.5 4.5 V2.2 H13.500 V4.500 M3.500 6 V14.500 Q3.500 18 7 18 H13 Q16.500 18 16.500 14.500 V6" fill="none" stroke="#ffd9c8" stroke-width="1.9"/><path d="M8 8.500 V15 M12 8.500 V15" stroke="#ffd9c8" stroke-width="1.600"/></svg><span style="left:30px;font-weight:700;letter-spacing:.8px">删除</span></div>
</div>
<div class="row" style="top:847.9px">
<div class="cb" style="left:8.7px;top:68px"></div>
<div class="c" style="left:75.8px"><div><span class="n">6</span></div></div><div class="c" style="left:142.9px"><div>物品名称<span class="n">4</span></div></div><div class="c" style="left:261.0px"><div>物品分类<span class="n">4</span></div></div><div class="c" style="left:644.0px"><div>物品规格<span class="n">4</span></div></div><div class="c" style="left:758.4px"><div>物品描述<span class="n">4</span></div></div><div class="c" style="left:872.8px"><div><span class="n">4</span></div></div><div class="c" style="left:987.2px"><div><span class="n">4</span></div></div><div class="c" style="left:1101.6px"><div><span class="n">2025-02-08</span><br><span class="n">20:24:11</span></div></div><div class="c" style="left:1216.0px"><div>用户账号<span class="n">4</span></div></div><div class="c" style="left:1330.4px"><div>用户姓名<span class="n">4</span></div></div><div class="c" style="left:1444.8px"><div><span class="n">4</span></div></div><div class="c" style="left:1559.2px"><div><span class="n">0</span></div></div><div class="c" style="left:1673.6px"><div><span class="n">4</span></div></div>
<div class="img"><svg width="134" height="134" viewBox="0 0 134 134"><defs><radialGradient id="g6" cx=".5" cy=".5" r=".75"><stop offset="0" stop-color="#efeef2"/><stop offset="1" stop-color="#e3e2e7"/></radialGradient></defs><rect width="134" height="134" fill="url(#g6)"/><ellipse cx="68" cy="121" rx="48" ry="5" fill="#d9d8dc"/><path d="M52 34 Q52 16 66 16 Q79 17 80 33" fill="none" stroke="#6b4631" stroke-width="4.200"/><path d="M22 74 Q12 84 6 96 L12 100 Q22 94 26 84 Z" fill="#6e4c36"/><path d="M111 86 L116 92 L114 100 L108 98 Z" fill="#7a573a"/><path d="M30 56 Q34 44 44 42 L92 42 Q104 48 110 70 Q116 92 107 120 Q68 126 25 119 Q20 88 30 56 Z" fill="#c9aa7e"/><path d="M36 40 Q40 34 66 33 Q92 34 97 40 Q100 52 92 56 Q76 60 66 55 Q52 58 44 52 Q36 48 36 40 Z" fill="#d2b48a" stroke="#7a5638" stroke-width="1.800"/><path d="M60 45 L67 42 L75 45 L67 49 Z" fill="#8a6a42"/><path d="M37.500 76 Q52 72 70 75 L68 119 Q50 121 36 118 Z" fill="#cdae82"/><path d="M37.500 76 Q52 72 70 75 L69 90 Q54 96 40 90 Z" fill="#d6b98e" stroke="#7a5638" stroke-width="1.600"/><path d="M86 76 Q100 72 112 76 L108 119 Q96 122 84 119 Z" fill="#cdae82"/><path d="M86 76 Q100 72 112 76 L110 90 Q98 95 87 90 Z" fill="#d6b98e" stroke="#7a5638" stroke-width="1.600"/><rect x="51.500" y="79" width="4.600" height="38" fill="#7a4f2c"/><rect x="93.500" y="76" width="4.800" height="40" fill="#7a4f2c"/><rect x="70.400" y="56" width="5" height="33" fill="#70482a"/><path d="M80 58 Q86 76 82 88" fill="none" stroke="#7a5638" stroke-width="1.500"/><rect x="50.500" y="100" width="6.600" height="4" fill="#d1a13c"/><rect x="92.500" y="96" width="6.800" height="4" fill="#d1a13c"/><rect x="69.500" y="66" width="6.800" height="3.500" fill="#c99a3a"/></svg></div>
<div class="tag">通过</div>
<div class="btn teal rb b1"><svg class="abs" style="left:7.3px;top:13.2px" width="15.4" height="15.4" viewBox="0 0 20 20"><path d="M10 1.5 V18.5 M1.5 10 H18.5" stroke="#fff" stroke-width="5.2"/></svg><span style="left:28.3px">查看</span></div><div class="btn teal rb b2"><svg class="abs" style="left:7.5px;top:13.2px" width="15.4" height="15.4" viewBox="0 0 20 20"><path d="M10 1.5 V18.5 M1.5 10 H18.5" stroke="#fff" stroke-width="5.2"/></svg><span style="left:28.5px">查看评论</span></div><div class="btn red rb b3"><svg class="abs" style="left:8px;top:13px" width="15.4" height="15.4" viewBox="0 0 20 20"><path d="M1 5 H19 M6.5 4.5 V2.2 H13.500 V4.500 M3.500 6 V14.500 Q3.500 18 7 18 H13 Q16.500 18 16.500 14.500 V6" fill="none" stroke="#ffd9c8" stroke-width="1.9"/><path d="M8 8.500 V15 M12 8.500 V15" stroke="#ffd9c8" stroke-width="1.600"/></svg><span style="left:30px;font-weight:700;letter-spacing:.8px">删除</span></div>
</div>
<div class="row" style="top:1004.2px">
<div class="cb" style="left:8.7px;top:68px"></div>
<div class="c" style="left:75.8px"><div><span class="n">7</span></div></div><div class="c" style="left:142.9px"><div>物品名称<span class="n">3</span></div></div><div class="c" style="left:261.0px"><div>物品分类<span class="n">3</span></div></div><div class="c" style="left:644.0px"><div>物品规格<span class="n">3</span></div></div><div class="c" style="left:758.4px"><div>物品描述<span class="n">3</span></div></div><div class="c" style="left:872.8px"><div><span class="n">3</span></div></div><div class="c" style="left:987.2px"><div><span class="n">3</span></div></div><div class="c" style="left:1101.6px"><div><span class="n">2025-02-08</span><br><span class="n">20:24:11</span></div></div><div class="c" style="left:1216.0px"><div>用户账号<span class="n">3</span></div></div><div class="c" style="left:1330.4px"><div>用户姓名<span class="n">3</span></div></div><div class="c" style="left:1444.8px"><div><span class="n">3</span></div></div><div class="c" style="left:1559.2px"><div><span class="n">0</span></div></div><div class="c" style="left:1673.6px"><div><span class="n">3</span></div></div>
<div class="img"><svg width="134" height="134" viewBox="0 0 134 134"><defs><radialGradient id="g7" cx=".8" cy=".05" r=".9"><stop offset="0" stop-color="#b4ecd2"/><stop offset=".35" stop-color="#52d8a8"/><stop offset=".7" stop-color="#30d09a"/><stop offset="1" stop-color="#22b680"/></radialGradient><linearGradient id="g7b" x1="0" y1="0" x2="1" y2="0"><stop offset="0" stop-color="#3a365c"/><stop offset="1" stop-color="#262440"/></linearGradient></defs><rect width="134" height="134" fill="url(#g7)"/><path d="M16 40 L60 104 L50 104 L14 46 Z" fill="#1a8e5e" opacity=".5"/><path d="M18 32 Q16 24 24 19 L44 7.500 Q52 4 56 10 L72 31 L132 100 L132 134 L78 134 L70 104 Z" fill="#1c1a30"/><path d="M21 31 Q20 25 26 21 L45 10 Q50 8 53 12 L69 33 L44 53 Z" fill="#4c4674"/><path d="M24 30 Q23 26 28 23 L44 13.500 Q48 12 50 15 L54 21 Q56 25 52 27 L36 37 Q30 40 28 36 Z" fill="#453f6c" stroke="#37325a" stroke-width="1"/><path d="M36 40 L57 26 L68 34 L46 54 Z" fill="#5a4f82"/><path d="M46 54 Q58 40 70 34 Q76 33 80 38 L130 100 L130 134 L80 134 L72 106 Z" fill="url(#g7b)"/><path d="M50 56 Q60 44 70 38 Q74 37 77 40 L126 100 L126 134 L84 134 L76 106 Z" fill="#3e3b60"/><circle cx="64.700" cy="50.500" r="2.800" fill="#141226"/><path d="M40 52 L45 56 L43 58 L38 54 Z" fill="#8e88a8"/></svg></div>
<div class="tag">通过</div>
<div class="btn teal rb b1"><svg class="abs" style="left:7.3px;top:13.2px" width="15.4" height="15.4" viewBox="0 0 20 20"><path d="M10 1.5 V18.5 M1.5 10 H18.5" stroke="#fff" stroke-width="5.2"/></svg><span style="left:28.3px">查看</span></div><div class="btn teal rb b2"><svg class="abs" style="left:7.5px;top:13.2px" width="15.4" height="15.4" viewBox="0 0 20 20"><path d="M10 1.5 V18.5 M1.5 10 H18.5" stroke="#fff" stroke-width="5.2"/></svg><span style="left:28.5px">查看评论</span></div><div class="btn red rb b3"><svg class="abs" style="left:8px;top:13px" width="15.4" height="15.4" viewBox="0 0 20 20"><path d="M1 5 H19 M6.5 4.5 V2.2 H13.500 V4.500 M3.500 6 V14.500 Q3.500 18 7 18 H13 Q16.500 18 16.500 14.500 V6" fill="none" stroke="#ffd9c8" stroke-width="1.9"/><path d="M8 8.500 V15 M12 8.500 V15" stroke="#ffd9c8" stroke-width="1.600"/></svg><span style="left:30px;font-weight:700;letter-spacing:.8px">删除</span></div>
</div>
</div>
<div id="sb"><svg class="abs" style="left:5px;top:7px" width="14" height="10" viewBox="0 0 14 10"><path d="M7 1.5 L13 8.5 H1 Z" fill="#a3a3a3"/></svg><div id="sbt"></div></div>
<div id="ov"><svg class="abs" style="left:32px;top:0" width="10" height="14" viewBox="0 0 10 14"><circle cx="2" cy="3" r="1.5" fill="#666"/><circle cx="7.5" cy="3" r="1.5" fill="#666"/><circle cx="2" cy="9" r="1.5" fill="#666"/><circle cx="7.5" cy="9" r="1.5" fill="#666"/></svg><span>公务员</span></div>
<div id="bot"></div>
</body></html>
